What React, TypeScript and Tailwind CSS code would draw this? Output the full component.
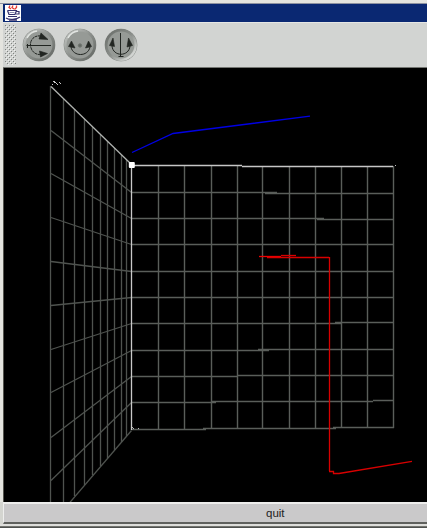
import React from 'react';

const wallX = [158, 184, 211, 237, 262, 289, 315, 341, 367, 393];
const sideX = [50, 63, 74, 84, 92, 100, 107, 114, 121, 126];
const wallRows = [
  'M132 192.5H277M265 193.5H393',
  'M132 218.5H324M317 219.5H393',
  'M132 244.5H393',
  'M132 271.5H393',
  'M132 297.5H393',
  'M132 323.5H341M335 322.5H393',
  'M132 350.5H269M258 349.5H393',
  'M132 376.5H237M237 375.5H393',
  'M132 402.5H216M212 401.5H373M373 400.5H393',
  'M132 429.5H206M203 428.5H336M333 427.5H394',
];
const sideRows = [
  [130, 192], [173, 218], [217, 244], [261, 271], [305, 297],
  [349, 323], [392, 350], [437, 376], [480, 402], [524, 430],
];

function Scene() {
  return (
    <svg className="block h-[434px] w-full bg-black" viewBox="3 68 424 434" preserveAspectRatio="xMinYMin slice" fill="none">
      <path d="M3.5 68V502" stroke="#55554f" />
      <g stroke="#5a5e5a" strokeWidth="1.4">
        {wallX.map((x) => <path key={x} d={`M${x + 0.5} 166V${x > 330 ? 428 : 429}`} />)}
        {wallRows.map((d) => <path key={d} d={d} />)}
      </g>
      <g stroke="#4f534f" strokeWidth="1.3">
        {sideX.map((x) => <path key={x} d={`M${x + 0.5} ${Math.round(86 + (x - 50) * 0.97)}V${Math.round(524 - (x - 50) * 1.16)}`} />)}
        {sideRows.map(([a, b]) => <path key={a} d={`M51 ${a + 0.5}L131.5 ${b + 0.5}`} />)}
      </g>
      <path d="M51 86.5L131.5 164.5" stroke="#b0b3b0" strokeWidth="1.3" />
      <path d="M131.5 165V430" stroke="#c9c9c9" strokeWidth="1.3" />
      <path d="M132 165.5H242M242 166.5H393" stroke="#c6c6c6" strokeWidth="1.4" />
      <g shapeRendering="crispEdges">
        <path d="M395 165.5h1M132 427.5h1M133 428.5h1M138 428.5h1" stroke="#bbb" />
        <path d="M52 84.5h1M53 81.5h2M54 82.5h2M56 83.5h1M59 82.5h1M60 83.5h1M57 84.5h1" stroke="#c8c8c8" />
      </g>
      <rect x="128.8" y="162" width="6" height="6" rx="1" fill="#fff" />
      <path d="M132 152.5L173 133.5L310 116.2" stroke="#0000e4" strokeWidth="1.3" />
      <g stroke="#d80000" strokeWidth="1.3">
        <path d="M259 256.5H281" stroke="#f00000" />
        <path d="M267 257.5H329" />
        <path d="M281 255.5H296" />
        <path d="M329.5 257V471" />
        <path d="M329 471.5H333.5V473.5H339L412 461.3" />
      </g>
    </svg>
  );
}

function Knob({ kind }: { kind: 'tilt' | 'spin' | 'turn' }) {
  return (
    <button className="size-[34px] shrink-0" aria-label={kind}>
      <svg viewBox="0 0 34 34" className="size-full" fill="none">
        <defs>
          <linearGradient id={`rim-${kind}`} x1="0" y1="0" x2="1" y2="1">
            <stop offset="0" stopColor={kind === 'turn' ? '#686c68' : '#c9ccc9'} />
            <stop offset=".5" stopColor="#8b8f8b" />
            <stop offset="1" stopColor={kind === 'turn' ? '#f0f2f0' : '#626662'} />
          </linearGradient>
        </defs>
        <circle cx="17" cy="17" r="16.3" fill="#7b7f7b" />
        <circle cx="17" cy="17" r="14.7" fill="#969a96" stroke={`url(#rim-${kind})`} strokeWidth="2.5" />
        {kind !== 'turn' && <path d="M5 10Q8 4 15 3" stroke="#e2e5e2" strokeWidth="1.5" />}
        {kind === 'tilt' && (
          <g stroke="#202420">
            <path d="M4.5 17.5H29M5.5 16v4" />
            <path d="M19 8C12 7 8 12 8.5 17.5C9 23 13 27 19 26.5" strokeDasharray="3 .6" />
            <path d="M19 5L26 11.5L17 11Z M17.500 23L25.500 25.500L18.500 29Z" fill="#222622" strokeWidth=".6" />
          </g>
        )}
        {kind === 'spin' && (
          <g stroke="#202420">
            <path d="M8 19C10 29 25 29 27 19" />
            <path d="M8.500 13L12 20L5.500 18.500ZM25.500 13L28.500 18.500L22.500 20Z" fill="#222622" strokeWidth=".6" />
            <circle cx="17" cy="17.500" r="1.700" fill="#626862" stroke="#727772" />
          </g>
        )}
        {kind === 'turn' && (
          <g stroke="#202420">
            <path d="M16.5 5V29M14.5 28.5H19.5" />
            <path d="M8 18C9 29 25 29 26 18" />
            <path d="M9 10L10.500 18.500L5.500 17.500ZM24.500 10L28.500 17.500L23 19Z" fill="#222622" strokeWidth=".6" />
          </g>
        )}
      </svg>
    </button>
  );
}

function JavaLogo() {
  return (
    <svg viewBox="0 0 16 16" className="ml-[2px] size-4 bg-white" fill="none">
      <path d="M5 .5L4 2.500l2 1.500M8 .5L7 2.500l2 1.500M11.500 .5V2.500l-2 2" stroke="#e33b30" strokeWidth="1.3" />
      <path d="M2.500 5.500H11.500L10 9.500H4L2.500 5.500M11 6.500h3v2.500h-3M3 11.500h9M1 13c3 2 10 2 14-1M4 15.200h8" stroke="#35316d" strokeWidth="1.2" />
      <path d="M4.500 7.500h5" stroke="#8c8bad" />
    </svg>
  );
}

export default function App() {
  return (
    <main className="flex h-[528px] w-[427px] flex-col overflow-hidden bg-[#d4d5d0] font-['Liberation_Sans',Arial,sans-serif]">
      <div className="h-1 shrink-0 border-b border-[#8e92a0] bg-[#e5e5df]" />
      <div className="flex h-[498px] w-full shrink-0 flex-col border-l-[3px] border-[#e4e4df]">
        <header className="flex h-[18px] shrink-0 items-center bg-[#0a2872]">
          <JavaLogo />
        </header>
        <nav className="flex h-[46px] shrink-0 items-center border-t border-b border-t-[#e5e6e4] border-b-[#747672] bg-[#d2d4d2] pl-[2px]">
          <svg className="mr-[6px] h-[40px] w-[11px]" aria-hidden="true">
            <defs>
              <pattern id="grip" width="4" height="4" patternUnits="userSpaceOnUse">
                <path d="M0 0h1v1H0zM2 2h1v1H2z" fill="#7f837f" />
                <path d="M1 1h1v1H1zM3 3h1v1H3z" fill="#f0f1ef" />
              </pattern>
            </defs>
            <rect width="11" height="40" fill="url(#grip)" />
          </svg>
          <div className="flex gap-[7px]">
            <Knob kind="tilt" />
            <Knob kind="spin" />
            <Knob kind="turn" />
          </div>
        </nav>
        <Scene />
      </div>
      <button className="ml-[3px] flex h-[22px] shrink-0 items-center border-t-2 border-b-2 border-l border-t-[#eeeeed] border-b-[#60615e] border-l-[#eeeeed] bg-[#cac9ca] pt-[2px] pl-[262px] text-[11.5px] leading-none text-[#222]">
        quit
      </button>
      <div className="h-[3px] shrink-0 border-b border-[#73746f] bg-[#dededb]" />
      <div className="h-px shrink-0 bg-[#4e504e]" />
    </main>
  );
}
